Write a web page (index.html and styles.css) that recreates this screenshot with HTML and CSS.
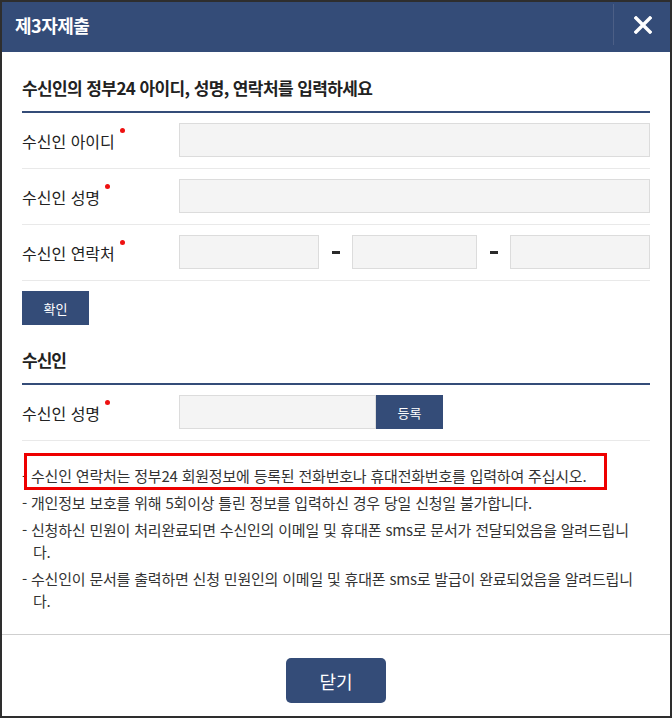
FILE: index.html
```html
<!DOCTYPE html>
<html lang="ko">
<head>
<meta charset="utf-8">
<title>제3자제출</title>
<link rel="stylesheet" href="styles.css">
</head>
<body>
<div class="modal">
  <header class="modal-header">
    <h1 class="modal-title">제3자제출</h1>
    <button class="modal-close" type="button" aria-label="닫기">
      <svg width="18" height="18" viewBox="0 0 18 18"><path d="M2 2 L16 16 M16 2 L2 16" stroke="#fff" stroke-width="3.4" stroke-linecap="square" fill="none"/></svg>
    </button>
  </header>
  <main class="modal-body">
    <h2 class="section-title">수신인의 정부24 아이디, 성명, 연락처를 입력하세요</h2>
    <div class="form-row">
      <label class="form-label">수신인 아이디<span class="req"></span></label>
      <input class="field" type="text">
    </div>
    <div class="form-row">
      <label class="form-label">수신인 성명<span class="req"></span></label>
      <input class="field" type="text">
    </div>
    <div class="form-row">
      <label class="form-label">수신인 연락처<span class="req"></span></label>
      <div class="phone">
        <input class="field" type="text">
        <span class="dash"></span>
        <input class="field" type="text">
        <span class="dash"></span>
        <input class="field" type="text">
      </div>
    </div>
    <button class="btn btn-confirm" type="button">확인</button>

    <h2 class="section-title section-title-2">수신인</h2>
    <div class="form-row">
      <label class="form-label">수신인 성명<span class="req"></span></label>
      <div class="name-reg">
        <input class="field field-name" type="text">
        <button class="btn btn-reg" type="button">등록</button>
      </div>
    </div>

    <ul class="notes">
      <li class="note highlight">- 수신인 연락처는 정부24 회원정보에 등록된 전화번호나 휴대전화번호를 입력하여 주십시오.</li>
      <li class="note">- 개인정보 보호를 위해 5회이상 틀린 정보를 입력하신 경우 당일 신청일 불가합니다.</li>
      <li class="note">- 신청하신 민원이 처리완료되면 수신인의 이메일 및 휴대폰 sms로 문서가 전달되었음을 알려드립니다.</li>
      <li class="note">- 수신인이 문서를 출력하면 신청 민원인의 이메일 및 휴대폰 sms로 발급이 완료되었음을 알려드립니다.</li>
    </ul>
  </main>
  <footer class="modal-footer">
    <button class="btn btn-close" type="button">닫기</button>
  </footer>
</div>
</body>
</html>
```

FILE: styles.css
```css
* { box-sizing: border-box; }
html, body { margin: 0; padding: 0; background: #fff; }
body {
  font-family: "Noto Sans CJK KR", "Noto Sans", sans-serif;
  color: #222;
}
.modal {
  width: 672px;
  height: 718px;
  border: 2px solid #2e2e2e;
  display: flex;
  flex-direction: column;
  background: #fff;
}
.modal-header {
  height: 50px;
  flex: none;
  background: #344c78;
  display: flex;
  align-items: flex-start;
  justify-content: space-between;
}
.modal-title {
  margin: 0;
  padding-left: 13px;
  line-height: 46px;
  font-size: 18px;
  font-weight: 700;
  letter-spacing: -0.5px;
  color: #fff;
}
.modal-close {
  margin-top: 2px;
  width: 57px;
  height: 41px;
  border: 0;
  border-left: 1px solid #4c5f86;
  background: transparent;
  padding: 0;
  display: flex;
  align-items: center;
  justify-content: center;
}
.modal-close svg { display: block; margin-left: 2px; }
.modal-body {
  flex: 1;
  padding: 0 20px;
}
.section-title {
  margin: 24px 0 0;
  padding-bottom: 11px;
  border-bottom: 2px solid #344c78;
  font-size: 17px;
  line-height: 24px;
  font-weight: 700;
  letter-spacing: -0.6px;
  color: #222;
}
.section-title-2 { margin-top: 23px; letter-spacing: -1px; }
.form-row {
  display: grid;
  grid-template-columns: 157px 1fr;
  align-items: center;
  padding: 10px 0 11px;
  border-bottom: 1px solid #e9e9e9;
}
.form-label {
  font-size: 16px;
  line-height: 24px;
  color: #222;
  white-space: nowrap;
}
.req {
  display: inline-block;
  width: 5px;
  height: 5px;
  margin-left: 5px;
  border-radius: 50%;
  background: #ee1111;
  vertical-align: 15px;
}
.field {
  display: block;
  width: 100%;
  height: 34px;
  margin: 0;
  border: 1px solid #dcdcdc;
  background: #f4f4f4;
  font: inherit;
}
.phone {
  display: grid;
  grid-template-columns: 140px 33px 125px 33px 1fr;
  align-items: center;
}
.dash {
  justify-self: center;
  width: 8px;
  height: 3px;
  background: #2a2a2a;
}
.name-reg { display: flex; }
.field-name { width: 197px; }
.btn {
  border: 0;
  background: #344c78;
  color: #fff;
  font-family: inherit;
  padding: 0;
}
.btn-confirm {
  display: block;
  margin-top: 10px;
  width: 67px;
  height: 34px;
  font-size: 13px;
}
.btn-reg {
  width: 67px;
  height: 34px;
  font-size: 13px;
}
.notes {
  list-style: none;
  margin: 24px 0 0;
  padding: 0 10px 0 0;
}
.note {
  font-size: 15px;
  line-height: 22px;
  letter-spacing: -0.2px;
  color: #333;
  padding-left: 11px;
  text-indent: -11px;
  margin-bottom: 5px;
}
.highlight {
  position: relative;
}
.highlight::after {
  content: "";
  position: absolute;
  left: 2px;
  top: -12px;
  width: 577px;
  bottom: -3px;
  border: 3px solid #ee0000;
}
.modal-footer {
  flex: none;
  height: 82px;
  border-top: 1px solid #cfcfcf;
  display: flex;
  justify-content: center;
  padding-top: 23px;
}
.btn-close {
  width: 100px;
  height: 45px;
  border-radius: 5px;
  font-size: 18px;
}
```
